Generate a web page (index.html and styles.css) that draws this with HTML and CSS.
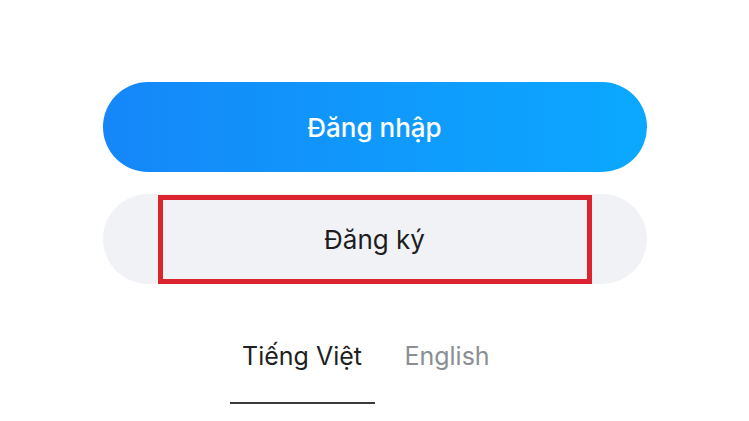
FILE: index.html
```html
<!DOCTYPE html>
<html>
<head>
  <meta charset="utf-8">
  <link rel="stylesheet" href="styles.css">
</head>
<body>
  <div class="auth">
    <button class="btn btn-primary">Đăng nhập</button>
    <button class="btn btn-secondary">
      <span class="highlight">Đăng ký</span>
    </button>
    <div class="lang-tabs">
      <span class="lang-tab active">Tiếng Việt</span>
      <span class="lang-tab">English</span>
    </div>
  </div>
</body>
</html>
```

FILE: styles.css
```css
body, html {
  margin: 0;
  padding: 0;
  background-color: white;
  font-family: Inter, "Noto Sans", sans-serif;
}

.auth {
  width: 544px;
  margin: 0 auto;
  padding-top: 82px;
  display: flex;
  flex-direction: column;
  align-items: center;
}

.btn {
  box-sizing: border-box;
  width: 100%;
  height: 90px;
  border: none;
  border-radius: 45px;
  font-family: inherit;
  font-size: 26px;
  font-weight: 500;
  padding: 0;
  cursor: pointer;
  display: flex;
  justify-content: center;
  align-items: center;
}

.btn-primary {
  background: linear-gradient(90deg, #1587f9 0%, #0f9cfc 60%, #0ba8ff 100%);
  color: white;
}

.btn-secondary {
  margin-top: 22px;
  background-color: #f1f2f6;
  color: #1d1d1f;
  font-weight: 400;
  align-items: flex-end;
}

/* Red annotation frame round the register label */
.highlight {
  box-sizing: border-box;
  width: 434px;
  height: 89px;
  border: 5px solid #dc2430;
  display: flex;
  justify-content: center;
  align-items: center;
}

.lang-tabs {
  display: flex;
  margin-top: 57px;
}

.lang-tab {
  width: 145px;
  text-align: center;
  font-size: 25px;
  color: #8b8e93;
  padding-bottom: 31px;
  border-bottom: 2px solid transparent;
}

.lang-tab.active {
  color: #1f1f1f;
  border-bottom-color: #3c3c3c;
}
```
